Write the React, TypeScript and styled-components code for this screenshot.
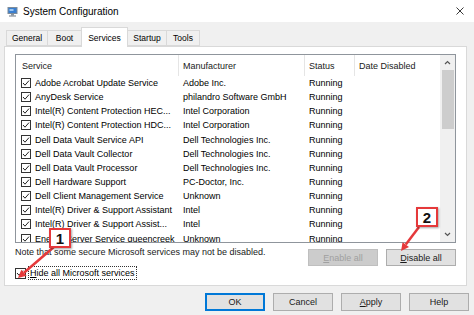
import React from 'react';
import styled, { createGlobalStyle } from 'styled-components';

const GlobalStyle = createGlobalStyle`
  html, body {
    margin: 0;
    padding: 0;
  }
  body {
    background: #f0f0f0;
    font-family: 'Liberation Sans', Arial, sans-serif;
    font-size: 9px;
    color: #000;
  }
`;

const Window = styled.div`
  position: relative;
  width: 474px;
  height: 315px;
  overflow: hidden;
  background: #f0f0f0;
`;

const TitleBar = styled.div`
  height: 22px;
  background: #fff;
  display: flex;
  align-items: center;
  padding: 0 10px 0 7px;
  .title {
    flex: 1;
    margin-left: 5px;
    font-size: 10px;
    color: #000;
  }
`;

const Body = styled.div`
  padding: 0 5px 0 4px;
`;

const TabRow = styled.div`
  display: flex;
  align-items: flex-end;
  height: 19px;
  margin: 5px 0 0 2px;
  position: relative;
  z-index: 1;
`;

const Tab = styled.div<{ $w: number; $active?: boolean }>`
  width: ${(p) => p.$w}px;
  height: ${(p) => (p.$active ? 20 : 16)}px;
  margin-bottom: ${(p) => (p.$active ? -1 : 0)}px;
  box-sizing: border-box;
  display: flex;
  align-items: center;
  justify-content: center;
  font-size: 8.5px;
  background: ${(p) => (p.$active ? '#fff' : '#f0f0f0')};
  border: 1px solid #d9d9d9;
  border-bottom: ${(p) => (p.$active ? 'none' : '1px solid #d9d9d9')};
  & + & {
    margin-left: -1px;
  }
`;

const Panel = styled.div`
  width: 463px;
  height: 240px;
  box-sizing: border-box;
  background: #fff;
  border: 1px solid #d9d9d9;
  padding: 7px 10px 0 10px;
`;

const ListBox = styled.div`
  height: 189px;
  box-sizing: border-box;
  border: 1px solid #8f959c;
  display: flex;
  overflow: hidden;
`;

const Table = styled.div`
  flex: 1;
  overflow: hidden;
`;

const columns = '162px 126px 50px 1fr';

const HeaderRow = styled.div`
  display: grid;
  grid-template-columns: ${columns};
  height: 21px;
`;

const HeaderCell = styled.div<{ $first?: boolean }>`
  display: flex;
  align-items: center;
  padding-left: ${(p) => (p.$first ? 6 : 4)}px;
  border-left: ${(p) => (p.$first ? 'none' : '1px solid #e5e5e5')};
  color: #1a1a1a;
`;

const Row = styled.div`
  display: grid;
  grid-template-columns: ${columns};
  height: 14.15px;
  align-items: center;
  white-space: nowrap;
`;

const ServiceCell = styled.div`
  display: flex;
  align-items: center;
  gap: 4px;
  padding-left: 5px;
  overflow: hidden;
`;

const Cell = styled.div<{ $pad: number }>`
  padding-left: ${(p) => p.$pad}px;
  overflow: hidden;
`;

const Box = styled.span<{ $size: number }>`
  width: ${(p) => p.$size}px;
  height: ${(p) => p.$size}px;
  box-sizing: border-box;
  border: 1px solid #333;
  background: #fff;
  display: inline-flex;
  flex: none;
  svg {
    display: block;
  }
`;

const ScrollBar = styled.div`
  width: 15px;
  background: #f0f0f0;
  display: flex;
  flex-direction: column;
  align-items: center;
`;

const ScrollArrow = styled.div`
  height: 15px;
  width: 100%;
  display: flex;
  align-items: center;
  justify-content: center;
`;

const Thumb = styled.div`
  width: 12px;
  height: 59px;
  background: #cdcdcd;
`;

const ScrollTrack = styled.div`
  flex: 1;
`;

const NoteRow = styled.div`
  display: flex;
  justify-content: space-between;
  align-items: flex-start;
  margin-top: 4px;
`;

const Note = styled.div`
  line-height: 11px;
  color: #1a1a1a;
`;

const ButtonPair = styled.div`
  display: flex;
  gap: 8px;
  margin-top: 2px;
`;

const Button = styled.div<{ $w: number; $h: number; $disabled?: boolean; $default?: boolean }>`
  width: ${(p) => p.$w}px;
  height: ${(p) => p.$h}px;
  box-sizing: border-box;
  display: flex;
  align-items: center;
  justify-content: center;
  font-size: 9px;
  background: ${(p) => (p.$disabled ? '#cccccc' : '#e1e1e1')};
  color: ${(p) => (p.$disabled ? '#a0a0a0' : '#1a1a1a')};
  border: ${(p) =>
    p.$default ? '2px solid #0078d7' : p.$disabled ? '1px solid #bfbfbf' : '1px solid #adadad'};
  u {
    text-decoration: underline;
  }
`;

const HideRow = styled.div`
  display: flex;
  align-items: center;
  margin-top: 1px;
  gap: 3px;
  .label {
    outline: 1px dotted #333;
    outline-offset: 0;
    padding: 1px 1px;
    line-height: 10px;
  }
`;

const Footer = styled.div`
  display: flex;
  justify-content: flex-end;
  gap: 8px;
  margin-top: 7px;
`;

const Badge = styled.div<{ $x: number; $y: number }>`
  position: absolute;
  left: ${(p) => p.$x}px;
  top: ${(p) => p.$y}px;
  width: 22px;
  height: 20px;
  box-sizing: border-box;
  border: 2px solid #e5393b;
  background: #fff;
  display: flex;
  align-items: center;
  justify-content: center;
  font-weight: bold;
  font-size: 15px;
  color: #111;
  box-shadow: 1px 1px 2px rgba(0, 0, 0, 0.35);
`;

const Overlay = styled.svg`
  position: absolute;
  left: 0;
  top: 0;
  pointer-events: none;
`;

const Check = () => (
  <svg width="8" height="8" viewBox="0 0 8 8">
    <polyline points="1,4 3,6.2 7,1.6" fill="none" stroke="#222" strokeWidth="1" />
  </svg>
);

const Checkbox = ({ size = 10 }: { size?: number }) => (
  <Box $size={size}>
    <Check />
  </Box>
);

const Chevron = ({ up }: { up?: boolean }) => (
  <svg width="7" height="5" viewBox="0 0 7 5">
    <polyline
      points={up ? '1,4 3.5,1.5 6,4' : '1,1 3.5,3.5 6,1'}
      fill="none"
      stroke="#555"
      strokeWidth="1.2"
    />
  </svg>
);

const AppIcon = () => (
  <svg width="11" height="11" viewBox="0 0 11 11">
    <rect x="0.5" y="1" width="10" height="7" fill="#7f8c99" />
    <rect x="1.5" y="2" width="8" height="5" fill="#3a7fd0" />
    <rect x="2.5" y="3" width="4" height="2" fill="#9cc6f0" />
    <rect x="4" y="8" width="3" height="1.5" fill="#8a96a2" />
    <rect x="2" y="9.5" width="7" height="1" fill="#6d7884" />
  </svg>
);

const CloseIcon = () => (
  <svg width="8" height="8" viewBox="0 0 8 8">
    <path d="M0.5 0.5 L7.5 7.5 M7.5 0.5 L0.5 7.5" stroke="#222" strokeWidth="0.9" />
  </svg>
);

const services: [string, string][] = [
  ['Adobe Acrobat Update Service', 'Adobe Inc.'],
  ['AnyDesk Service', 'philandro Software GmbH'],
  ['Intel(R) Content Protection HEC...', 'Intel Corporation'],
  ['Intel(R) Content Protection HDC...', 'Intel Corporation'],
  ['Dell Data Vault Service API', 'Dell Technologies Inc.'],
  ['Dell Data Vault Collector', 'Dell Technologies Inc.'],
  ['Dell Data Vault Processor', 'Dell Technologies Inc.'],
  ['Dell Hardware Support', 'PC-Doctor, Inc.'],
  ['Dell Client Management Service', 'Unknown'],
  ['Intel(R) Driver & Support Assistant', 'Intel'],
  ['Intel(R) Driver & Support Assist...', 'Intel'],
  ['Energy Server Service queencreek', 'Unknown'],
];

const tabs: [string, number][] = [
  ['General', 42],
  ['Boot', 35],
  ['Services', 47],
  ['Startup', 40],
  ['Tools', 34],
];

const App: React.FC = () => (
  <Window>
    <GlobalStyle />
    <TitleBar>
      <AppIcon />
      <span className="title">System Configuration</span>
      <CloseIcon />
    </TitleBar>
    <Body>
      <TabRow>
        {tabs.map(([name, w]) => (
          <Tab key={name} $w={w} $active={name === 'Services'}>
            {name}
          </Tab>
        ))}
      </TabRow>
      <Panel>
        <ListBox>
          <Table>
            <HeaderRow>
              <HeaderCell $first>Service</HeaderCell>
              <HeaderCell>Manufacturer</HeaderCell>
              <HeaderCell>Status</HeaderCell>
              <HeaderCell>Date Disabled</HeaderCell>
            </HeaderRow>
            {services.map(([name, maker]) => (
              <Row key={name}>
                <ServiceCell>
                  <Checkbox />
                  <span>{name}</span>
                </ServiceCell>
                <Cell $pad={5}>{maker}</Cell>
                <Cell $pad={5}>Running</Cell>
                <Cell $pad={5} />
              </Row>
            ))}
          </Table>
          <ScrollBar>
            <ScrollArrow>
              <Chevron up />
            </ScrollArrow>
            <Thumb />
            <ScrollTrack />
            <ScrollArrow>
              <Chevron />
            </ScrollArrow>
          </ScrollBar>
        </ListBox>
        <NoteRow>
          <Note>Note that some secure Microsoft services may not be disabled.</Note>
          <ButtonPair>
            <Button $w={70} $h={17} $disabled>
              <span>
                <u>E</u>nable all
              </span>
            </Button>
            <Button $w={70} $h={17}>
              <span>
                <u>D</u>isable all
              </span>
            </Button>
          </ButtonPair>
        </NoteRow>
        <HideRow>
          <Checkbox size={11} />
          <span className="label">
            <u>H</u>ide all Microsoft services
          </span>
        </HideRow>
      </Panel>
      <Footer>
        <Button $w={60} $h={18} $default>
          OK
        </Button>
        <Button $w={60} $h={18}>
          Cancel
        </Button>
        <Button $w={60} $h={18}>
          <span>
            <u>A</u>pply
          </span>
        </Button>
        <Button $w={60} $h={18}>
          Help
        </Button>
      </Footer>
    </Body>

    <Overlay width="474" height="315" viewBox="0 0 474 315">
      <line x1="55" y1="246" x2="24" y2="272.7" stroke="#e5393b" strokeWidth="2.5" />
      <polygon points="18,278 26.6,275.7 21.3,269.7" fill="#e5393b" />
      <line x1="419" y1="227" x2="405.8" y2="244.6" stroke="#e5393b" strokeWidth="2.5" />
      <polygon points="401,251 409,247 402.6,242.2" fill="#e5393b" />
    </Overlay>
    <Badge $x={49} $y={228}>1</Badge>
    <Badge $x={416} $y={207}>2</Badge>
  </Window>
);

export default App;
